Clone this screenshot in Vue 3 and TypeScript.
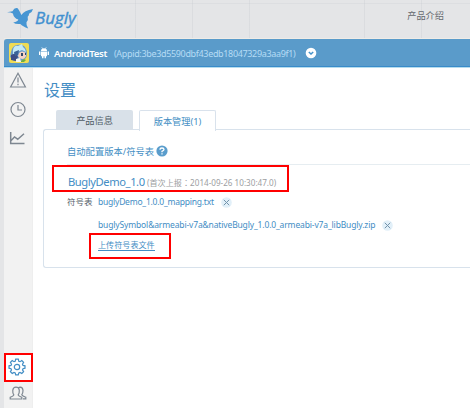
<script setup lang="ts">
interface SymbolFile { name: string; kind: string }

const files: SymbolFile[] = [
  { name: 'buglyDemo_1.0.0_mapping.txt', kind: 'mapping' },
  { name: 'buglySymbol&armeabi-v7a&nativeBugly_1.0.0_armeabi-v7a_libBugly.zip', kind: 'native' },
]
</script>

<template>
  <div class="page">
    <header class="top">
      <div class="brand">
        <svg class="bird" width="28" height="23" viewBox="0 0 28 23">
          <path d="M0 6.2 L5.5 5.2 Q7.5 1 10.7 2.2 Q12.5 4.5 14.4 9 Q17 4.4 26 3 Q25.2 6.6 22 7.8 Q22.4 9.4 20.7 10.7 Q21.6 13.5 19.5 16.2 Q18.9 18.9 21.2 22.5 Q15.5 20.4 13.4 18 Q8.6 18.5 6.2 16.6 Q11 15.6 11.3 13.6 Q6.7 12 5.9 7.4 Q4 6.3 0 6.2Z" fill="#4796d3" />
        </svg>
        <span class="brand-name">Bugly</span>
      </div>
      <a class="intro">产品介绍</a>
    </header>

    <div class="appbar">
      <svg class="avatar" width="20" height="20" viewBox="0 0 20 20">
        <rect width="20" height="20" rx="2" fill="#f0dc55" />
        <path d="M2 9 Q3 3 8 2 Q15 1 17 6 Q19 10 17 15 L12 18 L5 18 L1 14Z" fill="#6a9cc9" />
        <path d="M4 7 Q5 2 9 3 L13 1 L14 4 Q17 6 17 9 L13 7 L8 9 L4 12Z" fill="#c5eaf6" />
        <path d="M10 10 Q13 7 17 10 Q18 14 14 16 Q10 16 9 13Z" fill="#f5d2c4" />
        <path d="M2 12 L7 10 L9 14 L7 18 L2 17Z" fill="#3d4c85" />
        <path d="M5 9l5-2-1 5-3 1z" fill="#3a6298" />
        <path d="M12 10h2v3h-2zM16 10h1v2h-1z" fill="#33496a" />
        <path d="M7 16l4-1 1 4H7z" fill="#f4f6ef" />
        <path d="M12 18l3-2 2 1-2 2h-3z" fill="#6eae40" />
      </svg>
      <svg class="android" width="10" height="12" viewBox="0 0 10 12" fill="#fff">
        <path d="M2 4 Q2 1.2 5 1.2 Q8 1.2 8 4ZM2 4.5h6v4.7H2zM0 4.5h1.4v3.5H0zM8.6 4.5H10v3.5H8.6zM3 9h1.5v2.3H3zM5.5 9H7v2.3H5.5z" />
        <path d="M2.7.2 3.7 1.8M7.3.2 6.3 1.8" stroke="#fff" stroke-width=".6" />
      </svg>
      <span class="app-name">AndroidTest</span>
      <span class="app-id">(Appid:3be3d5590dbf43edb18047329a3aa9f1)</span>
      <svg class="chevron" width="12" height="12" viewBox="0 0 12 12">
        <circle cx="6" cy="6" r="5.3" fill="#fff" />
        <path d="M3.8 5 6 7 8.2 5" fill="none" stroke="#4593cb" stroke-width="1.5" />
      </svg>
    </div>

    <div class="body">
      <nav class="side">
        <svg class="ico" width="18" height="17" viewBox="0 0 18 17">
          <path d="M9 1.3 16.4 15H1.6Z" /><path d="M9 5.5v5M9 11.7v1.5" />
        </svg>
        <svg class="ico" width="18" height="17" viewBox="0 0 18 17">
          <circle cx="9" cy="8.5" r="7" /><path d="M9 4v5h4" />
        </svg>
        <svg class="ico" width="18" height="17" viewBox="0 0 18 17">
          <path d="M1.7 2v11.5h13.8M1.7 11 5.5 7l3.2 2.2 6.3-5.4" stroke-width="1.5" />
        </svg>
        <div class="spacer"></div>
        <div class="side-active">
          <svg class="ico gear" width="18" height="18" viewBox="0 0 18 18">
            <path d="M7.7 1.2h2.6l.5 2 1.2.5 1.8-1.1 1.8 1.8-1.1 1.8.5 1.2 2 .4v2.4l-2 .5-.5 1.2 1.1 1.8-1.8 1.8-1.8-1.1-1.2.5-.5 2H7.7l-.5-2-1.2-.5-1.8 1.1-1.8-1.8 1.1-1.8-.5-1.2-2-.5V7.8l2-.4.5-1.2-1.1-1.8 1.8-1.8L6 3.7l1.2-.5Z" />
            <circle cx="9" cy="9" r="2.7" />
          </svg>
          <span class="mark mark-side"></span>
        </div>
        <svg class="ico people" width="18" height="15" viewBox="0 0 18 15">
          <path d="M4.8 8.8Q3.5 7 3.8 4.2Q4.2 1.2 7 1.2Q10 1.2 10.3 4.2Q10.5 7 9.2 8.8Q9.2 10 12.8 11.3V13H1.2V11.3Q4.8 10 4.8 8.8ZM9.4 1.8Q10.2 1.2 11.2 1.2Q13.8 1.4 14 4.4Q14 7.2 12.8 8.7Q13 10 16.8 11.2V12.8H14" />
        </svg>
      </nav>

      <main class="content">
        <h1>设置</h1>
        <div class="tabs">
          <div class="tab"><span>产品信息</span></div>
          <div class="tab active"><span>版本管理(1)</span></div>
        </div>
        <section class="panel">
          <div class="auto">
            <span>自动配置版本/符号表</span>
            <svg width="12" height="12" viewBox="0 0 12 12">
              <circle cx="6" cy="6" r="5.6" fill="#5a9dcc" />
              <path d="M4 4.8Q4 3 6 3Q8 3 8 4.5Q8 5.5 6 6.3V7.3M6 8.3v1.3" fill="none" stroke="#fff" stroke-width="1.3" />
            </svg>
          </div>
          <div class="version">
            <span class="ver-name">BuglyDemo_1.0</span>
            <span class="ver-time">(首次上报<span class="colon">：</span>2014-09-26 10:30:47.0)</span>
            <span class="mark mark-version"></span>
          </div>
          <div class="symbols">
            <span class="label">符号表</span>
            <div class="files">
              <div v-for="file in files" :key="file.name" class="file">
                <a :class="file.kind">{{ file.name }}</a>
                <svg width="11" height="11" viewBox="0 0 11 11">
                  <circle cx="5.5" cy="5.5" r="5.3" fill="#e2f0f9" />
                  <path d="M2.8 2.8l5.4 5.4M8.2 2.8 2.8 8.2" stroke="#7393ab" stroke-width="1" />
                </svg>
              </div>
              <div class="upload">
                <a>上传符号表文件</a>
                <span class="mark mark-upload"></span>
              </div>
            </div>
          </div>
        </section>
      </main>
    </div>
  </div>
</template>

<style>
body { margin: 0; overflow: hidden; }
</style>

<style scoped>
* { box-sizing: border-box; }
.page {
  width: 470px; height: 408px; padding-left: 4px; overflow: hidden;
  display: flex; flex-direction: column;
  font-family: "Noto Sans", "Noto Sans CJK SC", sans-serif;
  white-space: nowrap;
  background-color: #e4e5e7;
  background-image:
    repeating-linear-gradient(90deg, transparent 0 20px, rgba(190,194,200,.25) 20px 21px, transparent 21px 57.3px),
    linear-gradient(rgba(190,194,200,.2), rgba(190,194,200,.2));
  background-size: auto, 100% 1px;
  background-position: 0 0, 0 3px;
  background-repeat: repeat, no-repeat;
}
svg { display: block; flex: none; }
.top { height: 39px; flex: none; display: flex; justify-content: space-between; padding: 6px 26px 0 3px; border-bottom: 1px solid #efece7; }
.brand { display: flex; }
.brand-name { font: italic 17px/23px "Open Sans", sans-serif; color: #4190d0; -webkit-text-stroke: .4px #4190d0; }
.intro { font-size: 9.2px; line-height: 20px; color: #64696e; }
.appbar {
  height: 29px; flex: none; display: flex; align-items: center; padding-left: 5px;
  background: #5a9bca; border-radius: 3px 0 0; border-bottom: 1px solid #b6dced; box-shadow: inset 0 -1px #388bca;
}
.android { margin-left: 10px; }
.app-name { width: 60px; margin-left: 5px; font-size: 9.6px; font-weight: 600; letter-spacing: -.28px; color: #fff; }
.app-id { width: 191px; font-size: 9px; letter-spacing: -.34px; color: #b5dcf5; }
.body { flex: 1; display: flex; min-height: 0; }
.side { width: 29px; flex: none; background: #f2f2f2; border-right: 1px solid #eee; display: flex; flex-direction: column; padding-top: 4px; }
.ico { fill: none; stroke: #7e8791; stroke-width: 1.2; margin: 0 0 12px 5px; }
.spacer { flex: 1; }
.side-active { position: relative; width: 29px; height: 29px; flex: none; background: #fff; padding-top: 5px; }
.gear { stroke: #438ec5; margin-left: 4px; }
.people { margin: 4px 0 7px 5px; }
.content { flex: 1; min-width: 0; background: #fff; padding: 10px 0 0 10px; }
h1 { margin: 0 0 0 1px; font-size: 16px; font-weight: 400; line-height: 24px; color: #438dc4; }
.tabs { display: flex; gap: 6px; height: 20px; margin: 8px 0 -1px 13px; position: relative; }
.tab { width: 77px; height: 20px; background: #d9e1e9; border-radius: 2px 2px 0 0; font-size: 9.2px; line-height: 22px; text-align: center; color: #505d66; }
.tab.active { height: 21px; background: #fff; border: 1px solid #d9e2ec; border-bottom: 0; color: #458fc4; line-height: 21px; }
.panel { height: 139px; border: 1px solid #d8e2ec; border-right: 0; border-radius: 3px 0 0 3px; padding: 13px 0 0 23px; }
.auto { display: flex; align-items: center; gap: 2px; height: 22px; padding-bottom: 5px; border-bottom: 1px solid #e6edf1; font-size: 9.3px; color: #458fc4; }
.version { position: relative; display: flex; align-items: baseline; height: 29px; line-height: 33px; }
.ver-name { width: 79px; margin-left: 1px; font-size: 11.2px; letter-spacing: -.42px; color: #438dc4; }
.ver-time { font-size: 8.15px; color: #9c9ea2; }
.colon { font-family: "Noto Sans CJK TC", sans-serif; }
.symbols { display: flex; font-size: 8.5px; color: #56616a; line-height: 16px; }
.label { width: 31px; }
.file { display: flex; align-items: center; height: 16px; gap: 7px; color: #438dc4; }
.file + .file { margin-top: 7px; }
.mapping { letter-spacing: -.22px; }
.native { letter-spacing: -.145px; }
.upload { position: relative; width: 57px; height: 16px; margin-top: 6px; color: #438dc4; }
.upload a { font-size: 8.1px; border-bottom: 1px solid #438dc4; display: block; line-height: 11px; }
.mark { position: absolute; border: 2px solid #f00; }
.mark-side { inset: 0; }
.mark-version { left: -15px; top: 0; width: 237px; height: 27px; }
.mark-upload { left: -9px; top: -6px; width: 82px; height: 26px; }
</style>
